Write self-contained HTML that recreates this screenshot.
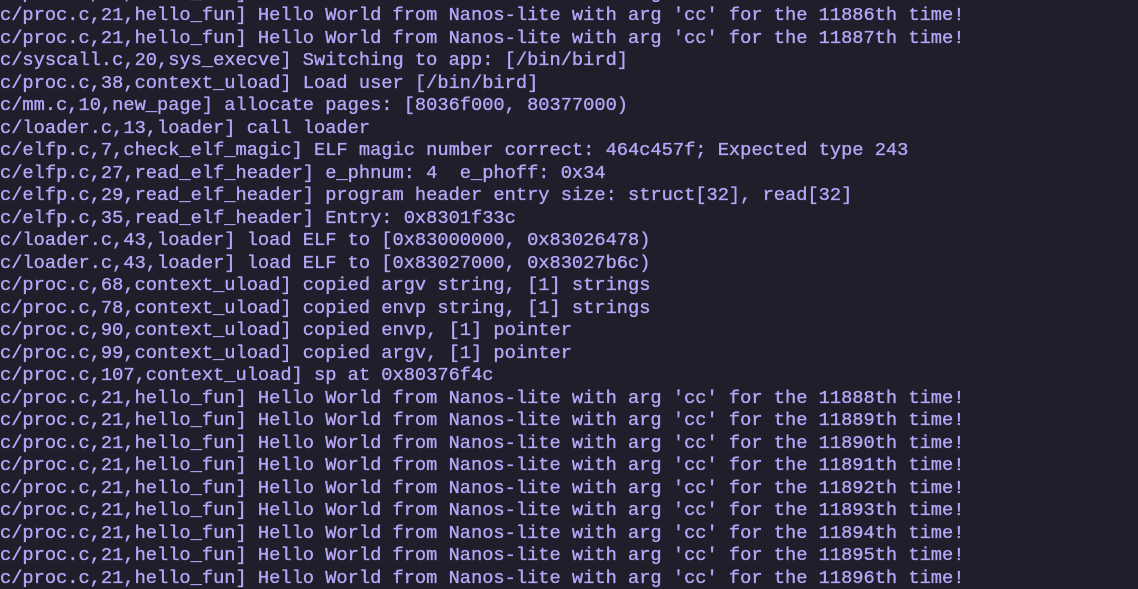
<!DOCTYPE html>
<html><head><meta charset="utf-8"><style>
html,body{margin:0;padding:0;background:#1e1f2b;width:1138px;height:574px;overflow:hidden}
pre{position:absolute;left:0;top:-18.2px;margin:0;font-family:"Liberation Mono","DejaVu Sans Mono",monospace;font-size:18.7px;line-height:22.5px;color:#b9a5f8;white-space:pre;-webkit-text-stroke:0.35px #b9a5f8}
</style></head><body><pre>c/proc.c,21,hello_fun] Hello World from Nanos-lite with arg 'cc' for the 11885th time!
c/proc.c,21,hello_fun] Hello World from Nanos-lite with arg 'cc' for the 11886th time!
c/proc.c,21,hello_fun] Hello World from Nanos-lite with arg 'cc' for the 11887th time!
c/syscall.c,20,sys_execve] Switching to app: [/bin/bird]
c/proc.c,38,context_uload] Load user [/bin/bird]
c/mm.c,10,new_page] allocate pages: [8036f000, 80377000)
c/loader.c,13,loader] call loader
c/elfp.c,7,check_elf_magic] ELF magic number correct: 464c457f; Expected type 243
c/elfp.c,27,read_elf_header] e_phnum: 4  e_phoff: 0x34
c/elfp.c,29,read_elf_header] program header entry size: struct[32], read[32]
c/elfp.c,35,read_elf_header] Entry: 0x8301f33c
c/loader.c,43,loader] load ELF to [0x83000000, 0x83026478)
c/loader.c,43,loader] load ELF to [0x83027000, 0x83027b6c)
c/proc.c,68,context_uload] copied argv string, [1] strings
c/proc.c,78,context_uload] copied envp string, [1] strings
c/proc.c,90,context_uload] copied envp, [1] pointer
c/proc.c,99,context_uload] copied argv, [1] pointer
c/proc.c,107,context_uload] sp at 0x80376f4c
c/proc.c,21,hello_fun] Hello World from Nanos-lite with arg 'cc' for the 11888th time!
c/proc.c,21,hello_fun] Hello World from Nanos-lite with arg 'cc' for the 11889th time!
c/proc.c,21,hello_fun] Hello World from Nanos-lite with arg 'cc' for the 11890th time!
c/proc.c,21,hello_fun] Hello World from Nanos-lite with arg 'cc' for the 11891th time!
c/proc.c,21,hello_fun] Hello World from Nanos-lite with arg 'cc' for the 11892th time!
c/proc.c,21,hello_fun] Hello World from Nanos-lite with arg 'cc' for the 11893th time!
c/proc.c,21,hello_fun] Hello World from Nanos-lite with arg 'cc' for the 11894th time!
c/proc.c,21,hello_fun] Hello World from Nanos-lite with arg 'cc' for the 11895th time!
c/proc.c,21,hello_fun] Hello World from Nanos-lite with arg 'cc' for the 11896th time!</pre></body></html>
